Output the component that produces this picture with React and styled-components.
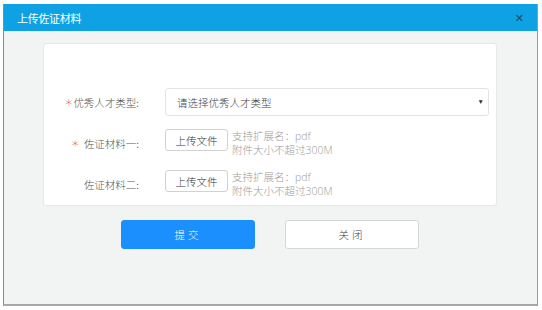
import React from "react";
import styled, { createGlobalStyle } from "styled-components";

const Global = createGlobalStyle`
  html, body { margin: 0; padding: 0; background: #ffffff; }
  body { font-family: "Noto Sans CJK SC", "Microsoft YaHei", sans-serif; }
  * { box-sizing: border-box; }
`;

const Page = styled.div`
  width: 542px;
  height: 310px;
  padding: 4px 4px 0 3px;
`;

const Dialog = styled.div`
  height: 302px;
  display: flex;
  flex-direction: column;
  border-left: 1px solid #8c8c8c;
  border-right: 1px solid #9a9a9a;
  border-bottom: 2px solid #a8a8a8;
  background: #f2f3f3;
`;

const Header = styled.div`
  height: 27px;
  flex: none;
  background: #0ea2e4;
  display: flex;
  align-items: center;
  justify-content: space-between;
  padding: 0 13px 0 13px;
`;

const Title = styled.span`
  color: #ffffff;
  font-size: 11px;
  font-weight: 400;
  letter-spacing: -0.3px;
`;

const Close = styled.span`
  color: #1f4a60;
  font-family: "DejaVu Sans", sans-serif;
  font-size: 11px;
  line-height: 1;
  margin-top: 1px;
`;

const Body = styled.div`
  flex: 1;
  display: flex;
  flex-direction: column;
  padding: 12px 40px 0 39px;
`;

const Card = styled.div`
  background: #ffffff;
  border: 1px solid #e6e7e8;
  border-radius: 3px;
  padding: 44px 7px 7px 0;
  display: flex;
  flex-direction: column;
  gap: 13px;
`;

const Row = styled.div`
  display: grid;
  grid-template-columns: 95px 1fr;
  column-gap: 26px;
  align-items: center;
  min-height: 28px;
`;

const Label = styled.label`
  display: flex;
  align-items: center;
  justify-content: flex-end;
  font-size: 10.5px;
  font-weight: 300;
  color: #555;
  white-space: nowrap;
`;

const Star = styled.span`
  color: #e5484d;
  font-family: "DejaVu Sans", sans-serif;
  font-size: 15px;
  line-height: 1;
  margin-right: ${(p) => p.$gap || 0}px;
`;

const Select = styled.div`
  height: 28px;
  border: 1px solid #e3e4e6;
  border-radius: 3px;
  display: flex;
  align-items: center;
  justify-content: space-between;
  padding: 0 4px 0 11px;
  font-size: 10.5px;
  font-weight: 300;
  color: #444;
`;

const Caret = styled.span`
  font-size: 6.5px;
  color: #333;
  font-family: "DejaVu Sans", sans-serif;
`;

const Upload = styled.div`
  display: flex;
  align-items: flex-start;
  gap: 4px;
`;

const FileButton = styled.div`
  height: 22px;
  width: 63px;
  border: 1px solid #cfd1d3;
  border-radius: 3px;
  background: #fff;
  display: flex;
  align-items: center;
  justify-content: center;
  font-size: 10.5px;
  font-weight: 300;
  color: #333;
`;

const Hint = styled.div`
  font-size: 10.5px;
  font-weight: 300;
  line-height: 14px;
  color: #9c9c9c;
  font-family: "Open Sans", "Noto Sans CJK SC", sans-serif;
`;

const Actions = styled.div`
  display: flex;
  justify-content: center;
  gap: 30px;
  margin-top: 14px;
`;

const Button = styled.div`
  width: 134px;
  height: 29px;
  border-radius: 3px;
  display: flex;
  align-items: center;
  justify-content: center;
  font-size: 10.5px;
  font-weight: 300;
  letter-spacing: 3px;
  background: ${(p) => (p.$primary ? "#1a8ffd" : "#ffffff")};
  color: ${(p) => (p.$primary ? "#ffffff" : "#444")};
  border: 1px solid ${(p) => (p.$primary ? "#1a8ffd" : "#d4d6d8")};
`;

function UploadRow({ label, required }) {
  return (
    <Row>
      <Label>
        {required && <Star $gap={4}>∗</Star>}
        {label}
      </Label>
      <Upload>
        <FileButton>上传文件</FileButton>
        <Hint>
          <div>支持扩展名：pdf</div>
          <div>附件大小不超过300M</div>
        </Hint>
      </Upload>
    </Row>
  );
}

export default function App() {
  return (
    <>
      <Global />
      <Page>
        <Dialog>
          <Header>
            <Title>上传佐证材料</Title>
            <Close>✕</Close>
          </Header>
          <Body>
            <Card>
              <Row>
                <Label>
                  <Star>∗</Star>优秀人才类型:
                </Label>
                <Select>
                  <span>请选择优秀人才类型</span>
                  <Caret>▼</Caret>
                </Select>
              </Row>
              <UploadRow label="佐证材料一:" required />
              <UploadRow label="佐证材料二:" />
            </Card>
            <Actions>
              <Button $primary>提交</Button>
              <Button>关闭</Button>
            </Actions>
          </Body>
        </Dialog>
      </Page>
    </>
  );
}
